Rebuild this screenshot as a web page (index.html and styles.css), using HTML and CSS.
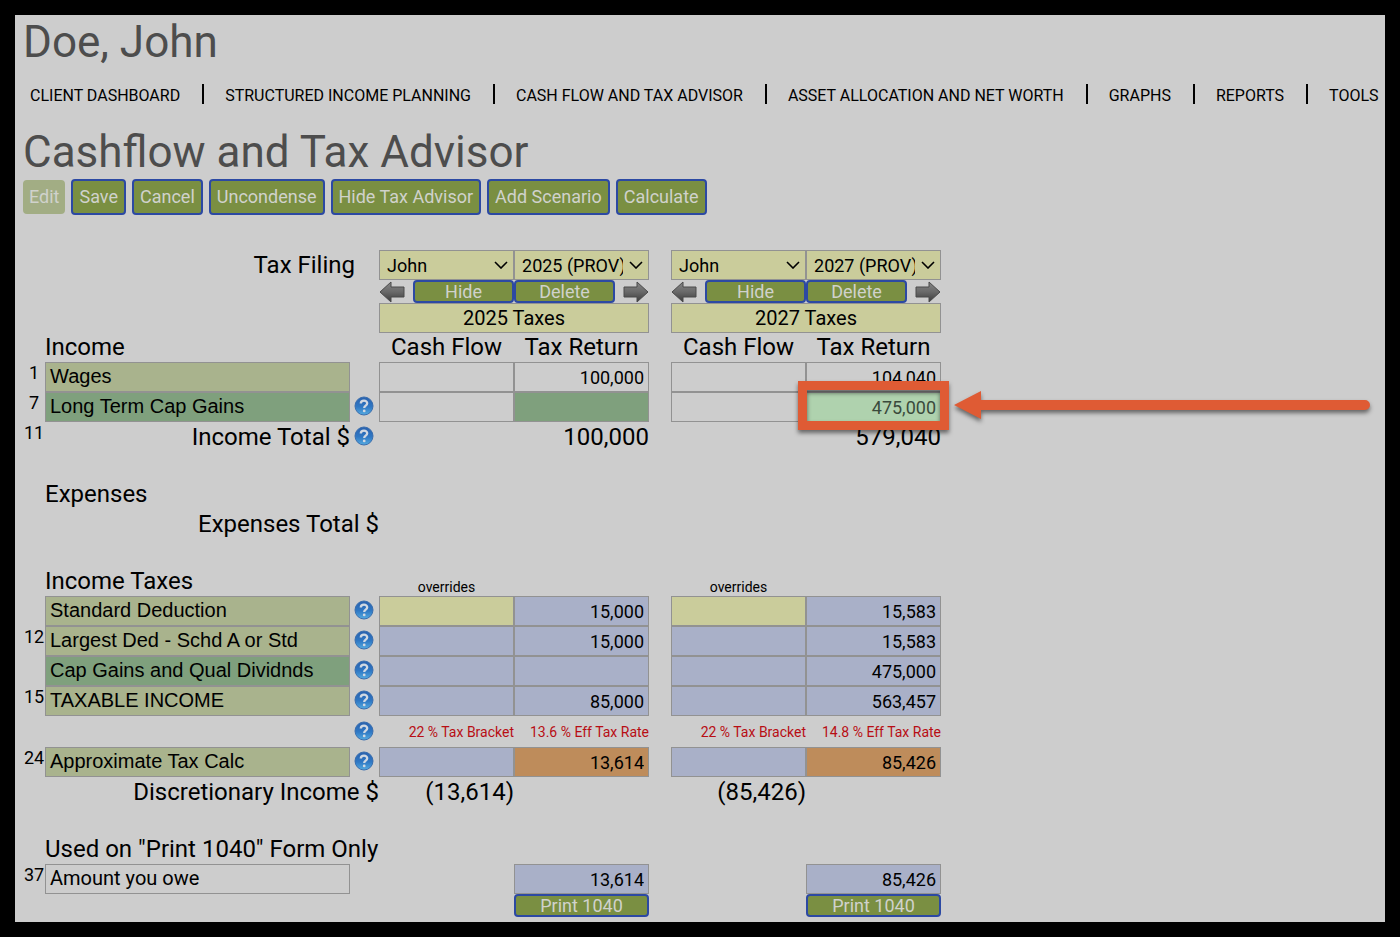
FILE: index.html
```html
<!DOCTYPE html>
<html lang="en">
<head>
    <meta charset="UTF-8">
    <title>Cashflow and Tax Advisor</title>
    <link rel="stylesheet" href="styles.css">
</head>
<body>
    <!-- shared icons -->
    <svg class="icon-defs" aria-hidden="true">
        <defs>
            <linearGradient id="blue" x1="0" y1="0" x2="0" y2="1">
                <stop offset="0" stop-color="#2a61ad"/>
                <stop offset="0.55" stop-color="#2f78c4"/>
                <stop offset="1" stop-color="#55abe0"/>
            </linearGradient>
            <linearGradient id="grey" x1="0" y1="0" x2="0" y2="1">
                <stop offset="0" stop-color="#858585"/>
                <stop offset="0.5" stop-color="#696969"/>
                <stop offset="1" stop-color="#3c3c3c"/>
            </linearGradient>
        </defs>
        <symbol id="help" viewBox="0 0 20 20">
            <circle cx="10" cy="10" r="9" fill="url(#blue)" stroke="#3a6eae"/>
            <path d="M6.8 7.6C6.8 3.6 13.2 3.8 13.2 7.3C13.2 9.6 10.2 9.6 10.2 12" fill="none" stroke="#d0d8e2" stroke-width="2.3"/>
            <circle cx="10.2" cy="14.9" r="1.4" fill="#d0d8e2"/>
        </symbol>
        <symbol id="arrow" viewBox="0 0 26 22">
            <path d="M1 11L12 1V6H25V16H12V21Z" fill="url(#grey)" stroke="#4a4a4a" stroke-linejoin="round"/>
        </symbol>
    </svg>

    <header>
        <h1>Doe, John</h1>
        <nav>
            <ul class="menu">
                <li><a href="#">CLIENT DASHBOARD</a></li>
                <li><a href="#">STRUCTURED INCOME PLANNING</a></li>
                <li><a href="#">CASH FLOW AND TAX ADVISOR</a></li>
                <li><a href="#">ASSET ALLOCATION AND NET WORTH</a></li>
                <li><a href="#">GRAPHS</a></li>
                <li><a href="#">REPORTS</a></li>
                <li><a href="#">TOOLS</a></li>
            </ul>
        </nav>
    </header>

    <main>
        <h2>Cashflow and Tax Advisor</h2>
        <div class="toolbar">
            <button class="btn" disabled>Edit</button>
            <button class="btn">Save</button>
            <button class="btn">Cancel</button>
            <button class="btn">Uncondense</button>
            <button class="btn">Hide Tax Advisor</button>
            <button class="btn">Add Scenario</button>
            <button class="btn">Calculate</button>
        </div>

        <table class="advisor">
            <colgroup>
                <col class="col-line"><col class="col-label"><col class="col-help">
                <col class="col-amount"><col class="col-amount"><col class="col-gap">
                <col class="col-amount"><col class="col-amount">
            </colgroup>
            <thead>
                <tr>
                    <td></td>
                    <th colspan="2" class="filing"><label for="filer-1">Tax Filing</label></th>
                    <td><select id="filer-1"><option>John</option></select></td>
                    <td><select aria-label="Year, scenario 1"><option>2025 (PROV)</option></select></td>
                    <td></td>
                    <td><select aria-label="Tax filing, scenario 2"><option>John</option></select></td>
                    <td><select aria-label="Year, scenario 2"><option>2027 (PROV)</option></select></td>
                </tr>
                <tr>
                    <td colspan="3"></td>
                    <td colspan="2">
                        <div class="scenario-bar">
                            <button class="move" aria-label="Move left"><svg><use href="#arrow"/></svg></button>
                            <div class="scenario-buttons">
                                <button class="btn small">Hide</button>
                                <button class="btn small">Delete</button>
                            </div>
                            <button class="move right" aria-label="Move right"><svg><use href="#arrow"/></svg></button>
                        </div>
                    </td>
                    <td></td>
                    <td colspan="2">
                        <div class="scenario-bar">
                            <button class="move" aria-label="Move left"><svg><use href="#arrow"/></svg></button>
                            <div class="scenario-buttons">
                                <button class="btn small">Hide</button>
                                <button class="btn small">Delete</button>
                            </div>
                            <button class="move right" aria-label="Move right"><svg><use href="#arrow"/></svg></button>
                        </div>
                    </td>
                </tr>
                <tr>
                    <td colspan="3"></td>
                    <td colspan="2"><input class="scenario-name" aria-label="Scenario 1 name" value="2025 Taxes"></td>
                    <td></td>
                    <td colspan="2"><input class="scenario-name" aria-label="Scenario 2 name" value="2027 Taxes"></td>
                </tr>
            </thead>

            <tbody>
                <tr class="heading">
                    <td></td>
                    <th colspan="2">Income</th>
                    <th class="center">Cash Flow</th>
                    <th class="center">Tax Return</th>
                    <td></td>
                    <th class="center">Cash Flow</th>
                    <th class="center">Tax Return</th>
                </tr>
                <tr>
                    <td class="line">1</td>
                    <th><label class="name" for="wages-1">Wages</label></th>
                    <td></td>
                    <td><input aria-label="Wages cash flow 2025"></td>
                    <td><input id="wages-1" value="100,000"></td>
                    <td></td>
                    <td><input aria-label="Wages cash flow 2027"></td>
                    <td><input aria-label="Wages 2027" value="104,040"></td>
                </tr>
                <tr>
                    <td class="line">7</td>
                    <th><label class="name gains" for="ltcg-1">Long Term Cap Gains</label></th>
                    <td class="help"><svg><use href="#help"/></svg></td>
                    <td><input aria-label="Cap gains cash flow 2025"></td>
                    <td><input id="ltcg-1" class="gains"></td>
                    <td></td>
                    <td><input aria-label="Cap gains cash flow 2027"></td>
                    <td class="callout">
                        <input class="highlight" aria-label="Long term cap gains 2027" value="475,000">
                        <span class="callout-box"></span>
                        <svg class="callout-arrow" viewBox="0 0 418 30">
                            <path d="M1 15L28 1V10H412A5 5 0 0 1 412 20H28V29Z" fill="#df5b34"/>
                        </svg>
                    </td>
                </tr>
                <tr class="total">
                    <td class="line">11</td>
                    <th>Income Total $</th>
                    <td class="help"><svg><use href="#help"/></svg></td>
                    <td></td>
                    <td>100,000</td>
                    <td></td>
                    <td></td>
                    <td>579,040</td>
                </tr>
            </tbody>

            <tbody>
                <tr class="heading section">
                    <td></td>
                    <th colspan="7">Expenses</th>
                </tr>
                <tr class="total">
                    <td></td>
                    <th colspan="2">Expenses Total $</th>
                    <td colspan="5"></td>
                </tr>
            </tbody>

            <tbody class="taxes">
                <tr class="heading section">
                    <td></td>
                    <th colspan="2">Income Taxes</th>
                    <td class="note">overrides</td>
                    <td></td>
                    <td></td>
                    <td class="note">overrides</td>
                    <td></td>
                </tr>
                <tr>
                    <td></td>
                    <th><label class="name" for="std-1">Standard Deduction</label></th>
                    <td class="help"><svg><use href="#help"/></svg></td>
                    <td><input class="override" aria-label="Standard deduction override 2025"></td>
                    <td><input id="std-1" value="15,000" readonly></td>
                    <td></td>
                    <td><input class="override" aria-label="Standard deduction override 2027"></td>
                    <td><input aria-label="Standard deduction 2027" value="15,583" readonly></td>
                </tr>
                <tr>
                    <td class="line">12</td>
                    <th><label class="name" for="largest-1">Largest Ded - Schd A or Std</label></th>
                    <td class="help"><svg><use href="#help"/></svg></td>
                    <td><input aria-label="Largest deduction override 2025" readonly></td>
                    <td><input id="largest-1" value="15,000" readonly></td>
                    <td></td>
                    <td><input aria-label="Largest deduction override 2027" readonly></td>
                    <td><input aria-label="Largest deduction 2027" value="15,583" readonly></td>
                </tr>
                <tr>
                    <td></td>
                    <th><label class="name gains" for="qual-1">Cap Gains and Qual Dividnds</label></th>
                    <td class="help"><svg><use href="#help"/></svg></td>
                    <td><input aria-label="Cap gains override 2025" readonly></td>
                    <td><input id="qual-1" readonly></td>
                    <td></td>
                    <td><input aria-label="Cap gains override 2027" readonly></td>
                    <td><input aria-label="Cap gains and dividends 2027" value="475,000" readonly></td>
                </tr>
                <tr>
                    <td class="line">15</td>
                    <th><label class="name" for="taxable-1">TAXABLE INCOME</label></th>
                    <td class="help"><svg><use href="#help"/></svg></td>
                    <td><input aria-label="Taxable income override 2025" readonly></td>
                    <td><input id="taxable-1" value="85,000" readonly></td>
                    <td></td>
                    <td><input aria-label="Taxable income override 2027" readonly></td>
                    <td><input aria-label="Taxable income 2027" value="563,457" readonly></td>
                </tr>
                <tr class="rates">
                    <td></td>
                    <td></td>
                    <td class="help"><svg><use href="#help"/></svg></td>
                    <td>22 % Tax Bracket</td>
                    <td>13.6 % Eff Tax Rate</td>
                    <td></td>
                    <td>22 % Tax Bracket</td>
                    <td>14.8 % Eff Tax Rate</td>
                </tr>
                <tr>
                    <td class="line">24</td>
                    <th><label class="name" for="tax-1">Approximate Tax Calc</label></th>
                    <td class="help"><svg><use href="#help"/></svg></td>
                    <td><input aria-label="Tax override 2025" readonly></td>
                    <td><input id="tax-1" class="tax" value="13,614" readonly></td>
                    <td></td>
                    <td><input aria-label="Tax override 2027" readonly></td>
                    <td><input class="tax" aria-label="Approximate tax 2027" value="85,426" readonly></td>
                </tr>
                <tr class="total">
                    <td></td>
                    <th colspan="2">Discretionary Income $</th>
                    <td>(13,614)</td>
                    <td></td>
                    <td></td>
                    <td>(85,426)</td>
                    <td></td>
                </tr>
            </tbody>

            <tbody class="taxes">
                <tr class="heading section">
                    <td></td>
                    <th colspan="7">Used on "Print 1040" Form Only</th>
                </tr>
                <tr>
                    <td class="line">37</td>
                    <th><label class="name plain" for="owe-1">Amount you owe</label></th>
                    <td></td>
                    <td></td>
                    <td><input id="owe-1" value="13,614" readonly></td>
                    <td></td>
                    <td></td>
                    <td><input aria-label="Amount you owe 2027" value="85,426" readonly></td>
                </tr>
                <tr>
                    <td colspan="4"></td>
                    <td><button class="btn small wide">Print 1040</button></td>
                    <td></td>
                    <td></td>
                    <td><button class="btn small wide">Print 1040</button></td>
                </tr>
            </tbody>
        </table>
    </main>
</body>
</html>
```
FILE: styles.css
```css
* {
    box-sizing: border-box;
}
body {
    margin: 0;
    min-height: 100vh;
    padding: 0 0 0 8px;
    border: 15px solid #000;
    background-color: #cdcdcd;
    color: #000;
    font-family: Roboto, Arial, sans-serif;
    overflow-x: hidden;
}
button, input, select {
    font-family: inherit;
    font-size: 18px;
    color: inherit;
}
.icon-defs {
    position: absolute;
    width: 0;
    height: 0;
}

/* header */
h1, h2 {
    margin: 0;
    font-size: 44px;
    line-height: 54px;
    font-weight: 400;
    color: #4d4d4d;
}
.menu {
    display: flex;
    list-style: none;
    margin: 15px 0 21px;
    padding: 0 0 0 7px;
}
.menu li {
    height: 20px;
    line-height: 24px;
    white-space: nowrap;
}
.menu li + li {
    margin-left: 22px;
    padding-left: 21px;
    border-left: 2px solid #000;
}
.menu a {
    color: inherit;
    text-decoration: none;
    font-size: 16px;
}

/* buttons */
.toolbar {
    display: flex;
    align-items: center;
    gap: 6px;
    margin-bottom: 35px;
}
.btn {
    height: 36px;
    padding: 0 6px 2px;
    border: 2px solid #2c49a3;
    border-radius: 4px;
    background-color: #7a8f42;
    color: #d0d2cc;
}
.btn:disabled {
    height: 34px;
    border-color: #a2ad84;
    background-color: #a2ad84;
    padding: 0 4px 2px;
}
.btn.small {
    display: block;
    width: 101px;
    height: 23px;
    padding: 0;
    line-height: 19px;
}
.btn.wide {
    width: 100%;
}
.scenario-bar {
    display: flex;
    justify-content: space-between;
    align-items: center;
}
.scenario-buttons {
    display: flex;
}
.move {
    padding: 0;
    border: none;
    background: none;
}
.move svg {
    display: block;
    width: 26px;
    height: 22px;
}
.move.right svg {
    transform: scaleX(-1);
}

/* table */
.advisor {
    table-layout: fixed;
    width: 918px;
    border-collapse: collapse;
}
.col-line { width: 22px; }
.col-label { width: 305px; }
.col-help { width: 29px; }
.col-amount { width: 135px; }
.col-gap { width: 22px; }
.advisor th,
.advisor td {
    padding: 0;
    font-weight: 400;
    text-align: left;
}
.advisor input,
.advisor select {
    display: block;
    width: 100%;
    height: 30px;
    margin: 0;
    border: 1px solid #929292;
    border-radius: 0;
    background-color: transparent;
    outline: 0;
}
.advisor input {
    padding: 0 4px;
    text-align: right;
}
.advisor select {
    appearance: none;
    padding: 0 25px 0 7px;
    background: #cacc9b url("data:image/svg+xml,%3Csvg xmlns='http://www.w3.org/2000/svg' width='14' height='8'%3E%3Cpath d='M1 1l6 6 6-6' fill='none' stroke='%23000' stroke-width='1.6'/%3E%3C/svg%3E") no-repeat right 5px center;
}
.advisor .filing {
    padding-right: 24px;
    font-size: 24px;
    line-height: 30px;
    text-align: right;
}
.advisor .scenario-name {
    background-color: #cacc9b;
    font-size: 20px;
    text-align: center;
}
.heading th {
    height: 29px;
    font-size: 24px;
    line-height: 29px;
    white-space: nowrap;
    vertical-align: bottom;
}
.section th {
    height: 57px;
}
.advisor .center {
    text-align: center;
}
.advisor .line {
    font-size: 18px;
    line-height: 22px;
    text-align: center;
    vertical-align: top;
}
.name {
    display: block;
    height: 30px;
    padding: 0 4px;
    border: 1px solid #929292;
    background-color: #a9b38d;
    font-family: "Liberation Sans", Arial, sans-serif;
    font-size: 20px;
    line-height: 27px;
}
.name.plain {
    background-color: transparent;
    font-family: inherit;
}
.name.gains,
.advisor input.gains {
    background-color: #7fa07d;
}
.advisor .help {
    padding: 0 2px 2px 0;
}
.help svg {
    display: block;
    width: 20px;
    height: 20px;
    margin: 0 auto;
}
.advisor .total th,
.advisor .total td:not(.line, .help) {
    height: 30px;
    font-size: 24px;
    line-height: 30px;
    text-align: right;
}
.advisor .note {
    font-size: 14px;
    line-height: 18px;
    text-align: center;
    vertical-align: bottom;
}
.taxes input {
    background-color: #a9b0c8;
}
.advisor input.override {
    background-color: #cacc9b;
}
.advisor input.tax {
    background-color: #be8c5b;
}
.advisor .rates td {
    height: 31px;
    color: #b80d14;
    font-size: 14px;
    text-align: right;
    white-space: nowrap;
}

/* callout over the 2027 cap gains */
.advisor .callout {
    position: relative;
}
.advisor .highlight {
    background-color: #afd2ae;
    color: #3a4a3c;
}
.callout-box {
    position: absolute;
    inset: -11px -8px -8px;
    border: 9px solid #df5b34;
    filter: drop-shadow(0 3px 2px rgba(0, 0, 0, 0.5));
    pointer-events: none;
}
.callout-arrow {
    position: absolute;
    left: calc(100% + 12px);
    top: -2px;
    width: 418px;
    height: 30px;
    filter: drop-shadow(0 3px 2px rgba(0, 0, 0, 0.5));
}
```
